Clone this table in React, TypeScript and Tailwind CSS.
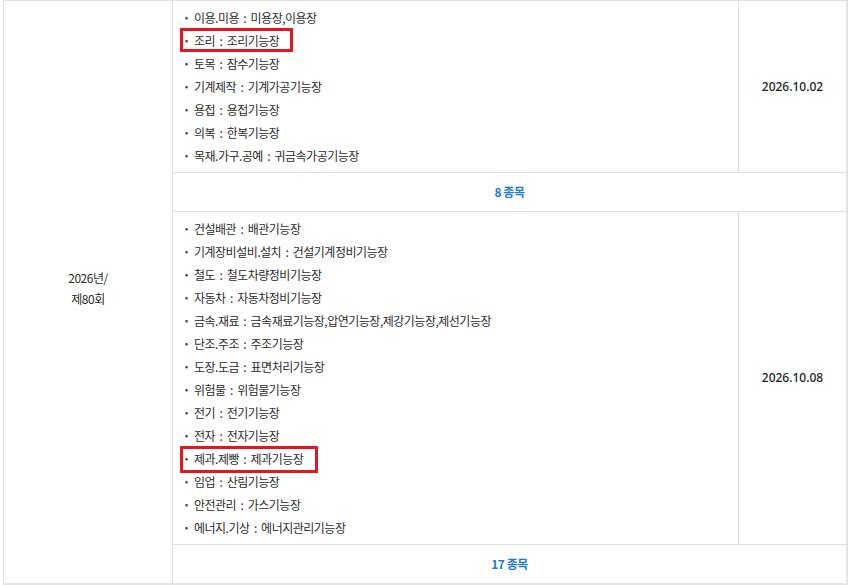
const groups = [
  {
    items: [
      "이용.미용 : 미용장,이용장",
      "조리 : 조리기능장",
      "토목 : 잠수기능장",
      "기계제작 : 기계가공기능장",
      "용접 : 용접기능장",
      "의복 : 한복기능장",
      "목재.가구.공예 : 귀금속가공기능장",
    ],
    mark: 1,
    markW: "w-[113px] h-[24px]",
    date: "2026.10.02",
    count: "8 종목",
  },
  {
    items: [
      "건설배관 : 배관기능장",
      "기계장비설비.설치 : 건설기계정비기능장",
      "철도 : 철도차량정비기능장",
      "자동차 : 자동차정비기능장",
      "금속.재료 : 금속재료기능장,압연기능장,제강기능장,제선기능장",
      "단조.주조 : 주조기능장",
      "도장.도금 : 표면처리기능장",
      "위험물 : 위험물기능장",
      "전기 : 전기기능장",
      "전자 : 전자기능장",
      "제과.제빵 : 제과기능장",
      "임업 : 산림기능장",
      "안전관리 : 가스기능장",
      "에너지.기상 : 에너지관리기능장",
    ],
    mark: 10,
    markW: "w-[138px] h-[27px]",
    date: "2026.10.08",
    count: "17 종목",
  },
];

function ItemList({ items, mark, markW }: { items: string[]; mark: number; markW: string }) {
  return (
    <ul className="py-[5px] pl-[12px]">
      {items.map((t, i) => (
        <li key={t} className="relative flex h-[23px] items-center">
          <span className="w-[9px] text-[9px] text-[#333]">•</span>
          <span className="whitespace-pre">{t.replace(" : ", "  :  ")}</span>
          {i === mark && (
            <span className={`absolute -left-[5px] top-[-1px] border-[3px] border-[#e5161d] ${markW}`} />
          )}
        </li>
      ))}
    </ul>
  );
}

export default function App() {
  return (
    <div
      className="h-[585px] w-[850px] bg-white text-[12px] tracking-[-0.5px] text-[#2b2b2b]"
      style={{ fontFamily: '"Noto Sans CJK KR", "Noto Sans", sans-serif' }}
    >
      <table className="ml-[3px] w-[845px] border-collapse border-b-2 border-r-2 border-[#e4e4e4]">
        <tbody>
          {groups.map((g, gi) => (
            <>
              <tr key={g.date}>
                {gi === 0 && (
                  <td
                    rowSpan={4}
                    className="w-[169px] border border-[#e1e1e1] pb-[7px] text-center align-middle leading-[21px]"
                  >
                    2026년/
                    <br />
                    제80회
                  </td>
                )}
                <td className="w-[566px] border border-[#e1e1e1] p-0 align-top">
                  <ItemList items={g.items} mark={g.mark} markW={g.markW} />
                </td>
                <td
                  className="border border-[#e1e1e1] text-center align-middle font-medium tracking-normal text-[#222]"
                  style={{ fontFamily: '"Noto Sans", sans-serif' }}
                >
                  {g.date}
                </td>
              </tr>
              <tr key={g.count}>
                <td
                  colSpan={2}
                  className="h-[39px] border border-[#e1e1e1] text-center align-middle font-semibold text-[#1b7ad3]"
                >
                  {g.count}
                </td>
              </tr>
            </>
          ))}
        </tbody>
      </table>
    </div>
  );
}
